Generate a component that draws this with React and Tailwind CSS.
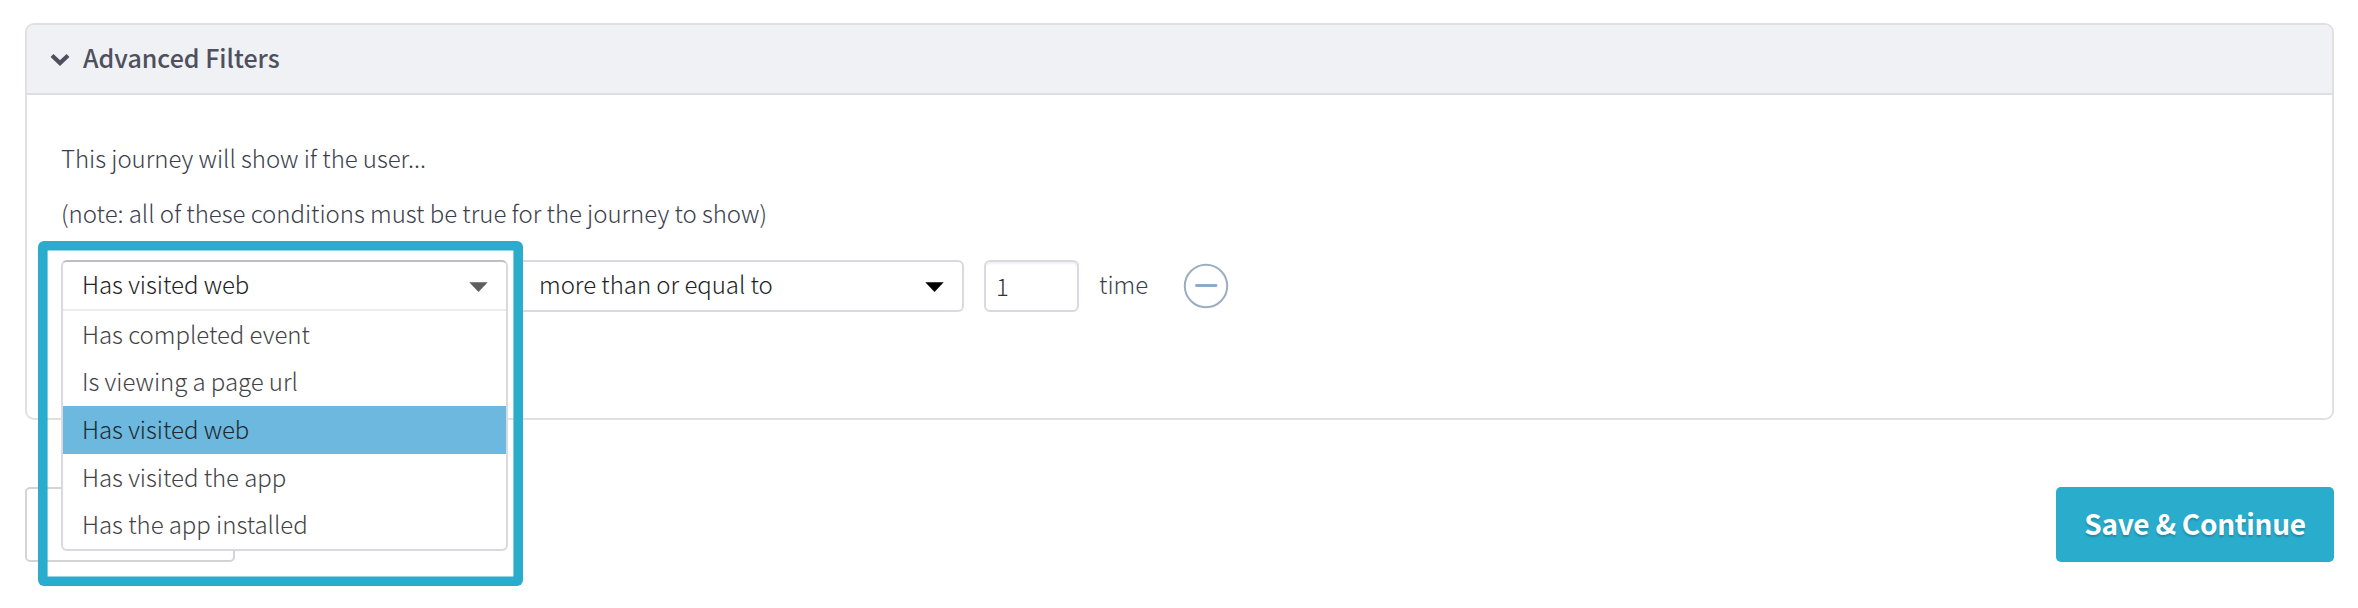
const options = [
  "Has completed event",
  "Is viewing a page url",
  "Has visited web",
  "Has visited the app",
  "Has the app installed",
];

function Caret({ className }) {
  return (
    <svg width="19" height="10" viewBox="0 0 19 10" className={className}>
      <path d="M0.3 0.3H18.7L9.5 10Z" fill="currentColor" />
    </svg>
  );
}

function ConditionDropdown() {
  return (
    <div className="absolute left-0 top-0 w-[447px] rounded-md border-2 border-t-[#bcbdc5] border-[#d9d9e1] bg-white">
      <div className="flex h-[49px] items-center justify-between border-b-2 border-[#ebecee] pb-1 pl-[19px] pr-[18px] tracking-[-0.04px] text-[#222224]">
        <span>Has visited web</span>
        <Caret className="mt-1.5 text-[#5e5e5f]" />
      </div>
      <ul>
        {options.map((option) => (
          <li
            key={option}
            className={
              option === "Has visited web"
                ? "flex h-[47.6px] items-center bg-[#6cb8df] pb-[2px] pl-[19px] text-[#22292e]"
                : "flex h-[47.6px] items-center pb-[2px] pl-[19px] text-[#434345]"
            }
          >
            {option}
          </li>
        ))}
      </ul>
    </div>
  );
}

export default function App() {
  return (
    <div className="relative h-[608px] w-[2358px] overflow-hidden bg-white pl-[25px] pr-6 pt-[22.5px] font-['Noto_Sans_CJK_SC','Source_Sans_Pro',sans-serif] text-[24px] leading-9 font-light tracking-[-0.04px] text-[#3c3e4c]">
      <section className="h-[397px] rounded-[9px] border-2 border-[#e0e0e1]">
        <header className="flex h-[70.5px] items-center gap-[13px] rounded-t-[7px] border-b-2 border-[#dededf] bg-[#f0f1f5] pb-[3px] pl-[23px] text-[25px] font-medium tracking-normal text-[#4e505e]">
          <svg width="20" height="14" viewBox="0 0 20 14" fill="none" className="mt-[5px]">
            <path d="M2 2.5L10 10L18 2.5" stroke="currentColor" strokeWidth="4.2" />
          </svg>
          <h2>Advanced Filters</h2>
        </header>
        <div className="pl-[34px] pt-[45px]">
          <p>This journey will show if the user...</p>
          <p className="mt-[19px]">(note: all of these conditions must be true for the journey to show)</p>
          <div className="relative mt-[29px] flex h-[52px] items-center">
            <div className="ml-[456px] flex h-[52px] w-[447px] items-center justify-between rounded-md border-2 border-[#d9d9e1] pb-[5px] pl-5 pr-[18px] text-[#222224]">
              <span>more than or equal to</span>
              <Caret className="mt-1.5 text-black" />
            </div>
            <div className="ml-5 flex h-[52px] w-[95px] items-center rounded-md border-2 border-[#d9d9e1] pl-[10px] text-[#333335] shadow-[inset_0_2px_2px_rgba(0,0,0,0.06)]">
              1
            </div>
            <span className="ml-5 pb-[5px]">time</span>
            <svg width="46" height="46" viewBox="0 0 46 46" fill="none" className="ml-[35px]">
              <circle cx="23" cy="23" r="21.2" stroke="#9badc0" strokeWidth="2" />
              <path d="M13.5 22.5H33" stroke="#8fa9cd" strokeWidth="2.8" strokeLinecap="round" />
            </svg>
            <ConditionDropdown />
          </div>
        </div>
      </section>
      <div className="mt-[67px] flex justify-between">
        <button className="h-[75px] w-[210px] rounded-[5px] border-2 border-[#d4d4d6] bg-white" aria-label="Cancel" />
        <button className="h-[75px] w-[278px] rounded-[5px] bg-[#2aaccd] pb-[3px] text-[28px] font-bold tracking-[-0.3px] text-white [text-shadow:0_2px_2px_rgba(0,0,0,0.2)]">
          Save &amp; Continue
        </button>
      </div>
      <div className="absolute left-[38px] top-[241px] h-[345px] w-[485px] rounded-[6px] bg-transparent shadow-[inset_0_0_0_9.6px_#2aaccd]" />
    </div>
  );
}
